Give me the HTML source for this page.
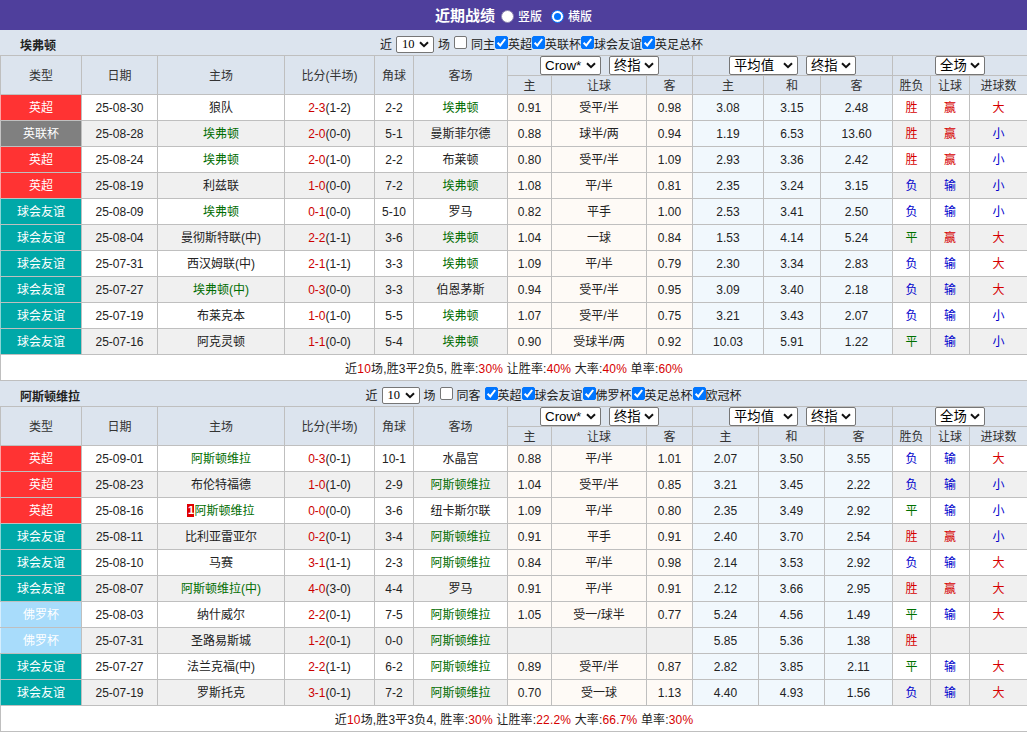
<!DOCTYPE html>
<html lang="zh-CN"><head><meta charset="utf-8"><title>近期战绩</title>
<style>
*{box-sizing:border-box}
html,body{margin:0;padding:0}
body{width:1027px;height:735px;overflow:hidden;background:#fff;font-family:"Liberation Sans","Noto Sans CJK SC",sans-serif;font-size:12px;color:#222;position:relative}
.top{height:30px;background:#4f3f9c;color:#fff;text-align:center;line-height:30px;font-size:12px;white-space:nowrap;position:relative}
.top .tt{font-size:15px;font-weight:bold;position:absolute;left:435px;top:1px}
.top .rd{position:absolute;top:10px;width:13px;height:13px;border-radius:50%;background:#fff;border:1px solid #8a84b0}
.top .rd.on{border:1px solid #0075ff}
.top .rd.on:after{content:"";position:absolute;left:2px;top:2px;width:7px;height:7px;border-radius:50%;background:#0075ff}
.top .rl{position:absolute;top:2px;font-size:12px;font-weight:500}
.bar{height:25px;background:#dce4ee;position:relative;white-space:nowrap}
.bar.b2{margin-top:0}
.bar .tn{position:absolute;left:20px;top:1px;line-height:30px;font-weight:bold;font-size:12px;color:#222}
.bar .flt{position:absolute;left:380px;top:4px;line-height:23px;height:21px;font-size:12px;color:#222;word-spacing:0.66px}
.bar.b2 .flt{left:365.5px}
.sel{display:inline-block;position:relative;height:19px;border:1px solid #767676;border-radius:2px;background:#fff;color:#000;font-size:13.33px;line-height:17px;text-align:left;padding-left:4px;vertical-align:top;font-weight:normal;word-spacing:0}
.sel svg{position:absolute;right:4px;top:5px;width:10px;height:7px}
.sel.s10{width:38px;height:17px;font-family:"Liberation Serif",serif;font-size:12.5px;line-height:15px;padding-left:5px;vertical-align:top;margin-top:2px}
.sel.s10 svg{top:4px}
.cb{display:inline-block;width:13px;height:13px;border:1px solid #767676;border-radius:2px;background:#fff;vertical-align:top;margin:2px 0 0 0;position:relative}
.cb.on{background:#0075ff;border-color:#0075ff}
.cb svg{position:absolute;left:-1px;top:-1px;width:13px;height:13px}
table.t{border-collapse:collapse;table-layout:fixed;width:1027px;}
table.t th,table.t td{border:1px solid #bfbfbf;text-align:center;font-weight:normal;padding:0;white-space:nowrap;overflow:hidden}
table.t th{background:#dce4ee;color:#333}
tr.h1{height:20px}
tr.h2{height:19px}
tr.r{height:26px}
tr.r td{background:#fff}
tr.r.alt td{background:#f0f0f0}
tr.r td.ah,tr.r.alt td.ah{background:#fefaf6}
tr.r td.eu,tr.r.alt td.eu{background:#f1f8fd}
td.ty{color:#fff}
tr.r td.ty.r{background:#ff3333;border-left-color:#ffa3a3}
tr.r td.ty.g{background:#808080;border-left-color:#c4c4c4}
tr.r td.ty.t{background:#00a8a8;border-left-color:#8ad6d6}
tr.r td.ty.b{background:#a8dcfb;border-left-color:#d6eefd}
.tg{color:#006c00}
.sc{color:#cc0000}
.red{color:#d60000}
.blue{color:#00c}
.green{color:#007000}
.rc{background:#e00000;color:#fff;padding:0;font-weight:bold;display:inline-block;width:7px;height:13px;line-height:13px;font-size:11px;vertical-align:1px;text-align:center}
tr.sum{height:26px}
tr.sum td{background:#fff;letter-spacing:0.17px}
.u{position:relative;top:-1px}

</style></head><body>
<div class="top"><span class="tt">近期战绩</span><span class="rd" style="left:501px"></span><span class="rl" style="left:518px">竖版</span><span class="rd on" style="left:551px"></span><span class="rl" style="left:568px">横版</span></div>
<div class="bar b1"><span class="tn">埃弗顿</span><div class="flt">近 <span class="sel s10">10<svg viewBox="0 0 10 7"><path d="M1 1.2 L5 5.2 L9 1.2" fill="none" stroke="#111" stroke-width="2"/></svg></span> 场 <span class="cb"></span> 同主<span class="cb on"><svg viewBox="0 0 13 13"><path d="M2.6 6.8 L5.3 9.4 L10.2 3" fill="none" stroke="#fff" stroke-width="2"/></svg></span>英超<span class="cb on"><svg viewBox="0 0 13 13"><path d="M2.6 6.8 L5.3 9.4 L10.2 3" fill="none" stroke="#fff" stroke-width="2"/></svg></span>英联杯<span class="cb on"><svg viewBox="0 0 13 13"><path d="M2.6 6.8 L5.3 9.4 L10.2 3" fill="none" stroke="#fff" stroke-width="2"/></svg></span>球会友谊<span class="cb on"><svg viewBox="0 0 13 13"><path d="M2.6 6.8 L5.3 9.4 L10.2 3" fill="none" stroke="#fff" stroke-width="2"/></svg></span>英足总杯</div></div>
<table class="t" cellspacing="0" cellpadding="0">
<colgroup><col style="width:81px"><col style="width:76px"><col style="width:127px"><col style="width:90px"><col style="width:39px"><col style="width:94px"><col style="width:44px"><col style="width:95px"><col style="width:46px"><col style="width:71px"><col style="width:57px"><col style="width:72px"><col style="width:38px"><col style="width:39px"><col style="width:58px"></colgroup>
<tr class="h1"><th rowspan="2"><span class="u">类型</span></th><th rowspan="2"><span class="u">日期</span></th><th rowspan="2"><span class="u">主场</span></th><th rowspan="2"><span class="u">比分(半场)</span></th><th rowspan="2"><span class="u">角球</span></th><th rowspan="2"><span class="u">客场</span></th>
<th colspan="3"><span class="sel" style="width:61px;left:-1px;margin-right:-1px">Crow*<svg viewBox="0 0 10 7"><path d="M1 1.2 L5 5.2 L9 1.2" fill="none" stroke="#111" stroke-width="2"/></svg></span><span class="sel" style="width:50px;margin-left:8px">终指<svg viewBox="0 0 10 7"><path d="M1 1.2 L5 5.2 L9 1.2" fill="none" stroke="#111" stroke-width="2"/></svg></span></th>
<th colspan="3"><span class="sel" style="width:69px">平均值<svg viewBox="0 0 10 7"><path d="M1 1.2 L5 5.2 L9 1.2" fill="none" stroke="#111" stroke-width="2"/></svg></span><span class="sel" style="width:50px;margin-left:8px">终指<svg viewBox="0 0 10 7"><path d="M1 1.2 L5 5.2 L9 1.2" fill="none" stroke="#111" stroke-width="2"/></svg></span></th>
<th colspan="3"><span class="sel" style="width:50px">全场<svg viewBox="0 0 10 7"><path d="M1 1.2 L5 5.2 L9 1.2" fill="none" stroke="#111" stroke-width="2"/></svg></span></th></tr>
<tr class="h2"><th><span class="u">主</span></th><th><span class="u">让球</span></th><th><span class="u">客</span></th><th><span class="u">主</span></th><th><span class="u">和</span></th><th><span class="u">客</span></th><th><span class="u">胜负</span></th><th><span class="u">让球</span></th><th><span class="u">进球数</span></th></tr>
<tr class="r"><td class="ty r"><span class="u">英超</span></td><td>25-08-30</td><td><span class="u">狼队</span></td><td><span class="sc">2-3</span>(1-2)</td><td>2-2</td><td><span class="u"><span class="tg">埃弗顿</span></span></td><td class="ah">0.91</td><td class="ah"><span class="u">受平/半</span></td><td class="ah">0.98</td><td class="eu">3.08</td><td class="eu">3.15</td><td class="eu">2.48</td><td class="red"><span class="u">胜</span></td><td class="red"><span class="u">赢</span></td><td class="red"><span class="u">大</span></td></tr>
<tr class="r alt"><td class="ty g"><span class="u">英联杯</span></td><td>25-08-28</td><td><span class="u"><span class="tg">埃弗顿</span></span></td><td><span class="sc">2-0</span>(0-0)</td><td>5-1</td><td><span class="u">曼斯菲尔德</span></td><td class="ah">0.88</td><td class="ah"><span class="u">球半/两</span></td><td class="ah">0.94</td><td class="eu">1.19</td><td class="eu">6.53</td><td class="eu">13.60</td><td class="red"><span class="u">胜</span></td><td class="red"><span class="u">赢</span></td><td class="blue"><span class="u">小</span></td></tr>
<tr class="r"><td class="ty r"><span class="u">英超</span></td><td>25-08-24</td><td><span class="u"><span class="tg">埃弗顿</span></span></td><td><span class="sc">2-0</span>(1-0)</td><td>2-2</td><td><span class="u">布莱顿</span></td><td class="ah">0.80</td><td class="ah"><span class="u">受平/半</span></td><td class="ah">1.09</td><td class="eu">2.93</td><td class="eu">3.36</td><td class="eu">2.42</td><td class="red"><span class="u">胜</span></td><td class="red"><span class="u">赢</span></td><td class="blue"><span class="u">小</span></td></tr>
<tr class="r alt"><td class="ty r"><span class="u">英超</span></td><td>25-08-19</td><td><span class="u">利兹联</span></td><td><span class="sc">1-0</span>(0-0)</td><td>7-2</td><td><span class="u"><span class="tg">埃弗顿</span></span></td><td class="ah">1.08</td><td class="ah"><span class="u">平/半</span></td><td class="ah">0.81</td><td class="eu">2.35</td><td class="eu">3.24</td><td class="eu">3.15</td><td class="blue"><span class="u">负</span></td><td class="blue"><span class="u">输</span></td><td class="blue"><span class="u">小</span></td></tr>
<tr class="r"><td class="ty t"><span class="u">球会友谊</span></td><td>25-08-09</td><td><span class="u"><span class="tg">埃弗顿</span></span></td><td><span class="sc">0-1</span>(0-0)</td><td>5-10</td><td><span class="u">罗马</span></td><td class="ah">0.82</td><td class="ah"><span class="u">平手</span></td><td class="ah">1.00</td><td class="eu">2.53</td><td class="eu">3.41</td><td class="eu">2.50</td><td class="blue"><span class="u">负</span></td><td class="blue"><span class="u">输</span></td><td class="blue"><span class="u">小</span></td></tr>
<tr class="r alt"><td class="ty t"><span class="u">球会友谊</span></td><td>25-08-04</td><td><span class="u">曼彻斯特联(中)</span></td><td><span class="sc">2-2</span>(1-1)</td><td>3-6</td><td><span class="u"><span class="tg">埃弗顿</span></span></td><td class="ah">1.04</td><td class="ah"><span class="u">一球</span></td><td class="ah">0.84</td><td class="eu">1.53</td><td class="eu">4.14</td><td class="eu">5.24</td><td class="green"><span class="u">平</span></td><td class="red"><span class="u">赢</span></td><td class="red"><span class="u">大</span></td></tr>
<tr class="r"><td class="ty t"><span class="u">球会友谊</span></td><td>25-07-31</td><td><span class="u">西汉姆联(中)</span></td><td><span class="sc">2-1</span>(1-1)</td><td>3-3</td><td><span class="u"><span class="tg">埃弗顿</span></span></td><td class="ah">1.09</td><td class="ah"><span class="u">平/半</span></td><td class="ah">0.79</td><td class="eu">2.30</td><td class="eu">3.34</td><td class="eu">2.83</td><td class="blue"><span class="u">负</span></td><td class="blue"><span class="u">输</span></td><td class="red"><span class="u">大</span></td></tr>
<tr class="r alt"><td class="ty t"><span class="u">球会友谊</span></td><td>25-07-27</td><td><span class="u"><span class="tg">埃弗顿(中)</span></span></td><td><span class="sc">0-3</span>(0-0)</td><td>3-3</td><td><span class="u">伯恩茅斯</span></td><td class="ah">0.94</td><td class="ah"><span class="u">受平/半</span></td><td class="ah">0.95</td><td class="eu">3.09</td><td class="eu">3.40</td><td class="eu">2.18</td><td class="blue"><span class="u">负</span></td><td class="blue"><span class="u">输</span></td><td class="red"><span class="u">大</span></td></tr>
<tr class="r"><td class="ty t"><span class="u">球会友谊</span></td><td>25-07-19</td><td><span class="u">布莱克本</span></td><td><span class="sc">1-0</span>(1-0)</td><td>5-5</td><td><span class="u"><span class="tg">埃弗顿</span></span></td><td class="ah">1.07</td><td class="ah"><span class="u">受平/半</span></td><td class="ah">0.75</td><td class="eu">3.21</td><td class="eu">3.43</td><td class="eu">2.07</td><td class="blue"><span class="u">负</span></td><td class="blue"><span class="u">输</span></td><td class="blue"><span class="u">小</span></td></tr>
<tr class="r alt"><td class="ty t"><span class="u">球会友谊</span></td><td>25-07-16</td><td><span class="u">阿克灵顿</span></td><td><span class="sc">1-1</span>(0-0)</td><td>5-4</td><td><span class="u"><span class="tg">埃弗顿</span></span></td><td class="ah">0.90</td><td class="ah"><span class="u">受球半/两</span></td><td class="ah">0.92</td><td class="eu">10.03</td><td class="eu">5.91</td><td class="eu">1.22</td><td class="green"><span class="u">平</span></td><td class="blue"><span class="u">输</span></td><td class="blue"><span class="u">小</span></td></tr>
<tr class="sum"><td colspan="15">近<span class="red">10</span>场,胜3平2负5, 胜率:<span class="red">30%</span> 让胜率:<span class="red">40%</span> 大率:<span class="red">40%</span> 单率:<span class="red">60%</span></td></tr>
</table>
<div class="bar b2"><span class="tn">阿斯顿维拉</span><div class="flt">近 <span class="sel s10">10<svg viewBox="0 0 10 7"><path d="M1 1.2 L5 5.2 L9 1.2" fill="none" stroke="#111" stroke-width="2"/></svg></span> 场 <span class="cb"></span> 同客 <span class="cb on"><svg viewBox="0 0 13 13"><path d="M2.6 6.8 L5.3 9.4 L10.2 3" fill="none" stroke="#fff" stroke-width="2"/></svg></span>英超<span class="cb on"><svg viewBox="0 0 13 13"><path d="M2.6 6.8 L5.3 9.4 L10.2 3" fill="none" stroke="#fff" stroke-width="2"/></svg></span>球会友谊<span class="cb on"><svg viewBox="0 0 13 13"><path d="M2.6 6.8 L5.3 9.4 L10.2 3" fill="none" stroke="#fff" stroke-width="2"/></svg></span>佛罗杯<span class="cb on"><svg viewBox="0 0 13 13"><path d="M2.6 6.8 L5.3 9.4 L10.2 3" fill="none" stroke="#fff" stroke-width="2"/></svg></span>英足总杯<span class="cb on"><svg viewBox="0 0 13 13"><path d="M2.6 6.8 L5.3 9.4 L10.2 3" fill="none" stroke="#fff" stroke-width="2"/></svg></span>欧冠杯</div></div>
<table class="t" cellspacing="0" cellpadding="0">
<colgroup><col style="width:81px"><col style="width:76px"><col style="width:127px"><col style="width:90px"><col style="width:39px"><col style="width:94px"><col style="width:44px"><col style="width:95px"><col style="width:46px"><col style="width:66px"><col style="width:66px"><col style="width:68px"><col style="width:38px"><col style="width:39px"><col style="width:58px"></colgroup>
<tr class="h1"><th rowspan="2"><span class="u">类型</span></th><th rowspan="2"><span class="u">日期</span></th><th rowspan="2"><span class="u">主场</span></th><th rowspan="2"><span class="u">比分(半场)</span></th><th rowspan="2"><span class="u">角球</span></th><th rowspan="2"><span class="u">客场</span></th>
<th colspan="3"><span class="sel" style="width:61px;left:-1px;margin-right:-1px">Crow*<svg viewBox="0 0 10 7"><path d="M1 1.2 L5 5.2 L9 1.2" fill="none" stroke="#111" stroke-width="2"/></svg></span><span class="sel" style="width:50px;margin-left:8px">终指<svg viewBox="0 0 10 7"><path d="M1 1.2 L5 5.2 L9 1.2" fill="none" stroke="#111" stroke-width="2"/></svg></span></th>
<th colspan="3"><span class="sel" style="width:69px">平均值<svg viewBox="0 0 10 7"><path d="M1 1.2 L5 5.2 L9 1.2" fill="none" stroke="#111" stroke-width="2"/></svg></span><span class="sel" style="width:50px;margin-left:8px">终指<svg viewBox="0 0 10 7"><path d="M1 1.2 L5 5.2 L9 1.2" fill="none" stroke="#111" stroke-width="2"/></svg></span></th>
<th colspan="3"><span class="sel" style="width:50px">全场<svg viewBox="0 0 10 7"><path d="M1 1.2 L5 5.2 L9 1.2" fill="none" stroke="#111" stroke-width="2"/></svg></span></th></tr>
<tr class="h2"><th><span class="u">主</span></th><th><span class="u">让球</span></th><th><span class="u">客</span></th><th><span class="u">主</span></th><th><span class="u">和</span></th><th><span class="u">客</span></th><th><span class="u">胜负</span></th><th><span class="u">让球</span></th><th><span class="u">进球数</span></th></tr>
<tr class="r"><td class="ty r"><span class="u">英超</span></td><td>25-09-01</td><td><span class="u"><span class="tg">阿斯顿维拉</span></span></td><td><span class="sc">0-3</span>(0-1)</td><td>10-1</td><td><span class="u">水晶宫</span></td><td class="ah">0.88</td><td class="ah"><span class="u">平/半</span></td><td class="ah">1.01</td><td class="eu">2.07</td><td class="eu">3.50</td><td class="eu">3.55</td><td class="blue"><span class="u">负</span></td><td class="blue"><span class="u">输</span></td><td class="red"><span class="u">大</span></td></tr>
<tr class="r alt"><td class="ty r"><span class="u">英超</span></td><td>25-08-23</td><td><span class="u">布伦特福德</span></td><td><span class="sc">1-0</span>(1-0)</td><td>2-9</td><td><span class="u"><span class="tg">阿斯顿维拉</span></span></td><td class="ah">1.04</td><td class="ah"><span class="u">受平/半</span></td><td class="ah">0.85</td><td class="eu">3.21</td><td class="eu">3.45</td><td class="eu">2.22</td><td class="blue"><span class="u">负</span></td><td class="blue"><span class="u">输</span></td><td class="blue"><span class="u">小</span></td></tr>
<tr class="r"><td class="ty r"><span class="u">英超</span></td><td>25-08-16</td><td><span class="u"><span class="rc">1</span><span class="tg">阿斯顿维拉</span></span></td><td><span class="sc">0-0</span>(0-0)</td><td>3-6</td><td><span class="u">纽卡斯尔联</span></td><td class="ah">1.09</td><td class="ah"><span class="u">平/半</span></td><td class="ah">0.80</td><td class="eu">2.35</td><td class="eu">3.49</td><td class="eu">2.92</td><td class="green"><span class="u">平</span></td><td class="blue"><span class="u">输</span></td><td class="blue"><span class="u">小</span></td></tr>
<tr class="r alt"><td class="ty t"><span class="u">球会友谊</span></td><td>25-08-11</td><td><span class="u">比利亚雷亚尔</span></td><td><span class="sc">0-2</span>(0-1)</td><td>3-4</td><td><span class="u"><span class="tg">阿斯顿维拉</span></span></td><td class="ah">0.91</td><td class="ah"><span class="u">平手</span></td><td class="ah">0.91</td><td class="eu">2.40</td><td class="eu">3.70</td><td class="eu">2.54</td><td class="red"><span class="u">胜</span></td><td class="red"><span class="u">赢</span></td><td class="blue"><span class="u">小</span></td></tr>
<tr class="r"><td class="ty t"><span class="u">球会友谊</span></td><td>25-08-10</td><td><span class="u">马赛</span></td><td><span class="sc">3-1</span>(1-1)</td><td>2-3</td><td><span class="u"><span class="tg">阿斯顿维拉</span></span></td><td class="ah">0.84</td><td class="ah"><span class="u">平/半</span></td><td class="ah">0.98</td><td class="eu">2.14</td><td class="eu">3.53</td><td class="eu">2.92</td><td class="blue"><span class="u">负</span></td><td class="blue"><span class="u">输</span></td><td class="red"><span class="u">大</span></td></tr>
<tr class="r alt"><td class="ty t"><span class="u">球会友谊</span></td><td>25-08-07</td><td><span class="u"><span class="tg">阿斯顿维拉(中)</span></span></td><td><span class="sc">4-0</span>(3-0)</td><td>4-4</td><td><span class="u">罗马</span></td><td class="ah">0.91</td><td class="ah"><span class="u">平/半</span></td><td class="ah">0.91</td><td class="eu">2.12</td><td class="eu">3.66</td><td class="eu">2.95</td><td class="red"><span class="u">胜</span></td><td class="red"><span class="u">赢</span></td><td class="red"><span class="u">大</span></td></tr>
<tr class="r"><td class="ty b"><span class="u">佛罗杯</span></td><td>25-08-03</td><td><span class="u">纳什威尔</span></td><td><span class="sc">2-2</span>(0-1)</td><td>7-5</td><td><span class="u"><span class="tg">阿斯顿维拉</span></span></td><td class="ah">1.05</td><td class="ah"><span class="u">受一/球半</span></td><td class="ah">0.77</td><td class="eu">5.24</td><td class="eu">4.56</td><td class="eu">1.49</td><td class="green"><span class="u">平</span></td><td class="blue"><span class="u">输</span></td><td class="red"><span class="u">大</span></td></tr>
<tr class="r alt"><td class="ty b"><span class="u">佛罗杯</span></td><td>25-07-31</td><td><span class="u">圣路易斯城</span></td><td><span class="sc">1-2</span>(0-1)</td><td>0-0</td><td><span class="u"><span class="tg">阿斯顿维拉</span></span></td><td></td><td></td><td></td><td class="eu">5.85</td><td class="eu">5.36</td><td class="eu">1.38</td><td class="red"><span class="u">胜</span></td><td class=""></td><td class=""></td></tr>
<tr class="r"><td class="ty t"><span class="u">球会友谊</span></td><td>25-07-27</td><td><span class="u">法兰克福(中)</span></td><td><span class="sc">2-2</span>(1-1)</td><td>6-2</td><td><span class="u"><span class="tg">阿斯顿维拉</span></span></td><td class="ah">0.89</td><td class="ah"><span class="u">受平/半</span></td><td class="ah">0.87</td><td class="eu">2.82</td><td class="eu">3.85</td><td class="eu">2.11</td><td class="green"><span class="u">平</span></td><td class="blue"><span class="u">输</span></td><td class="red"><span class="u">大</span></td></tr>
<tr class="r alt"><td class="ty t"><span class="u">球会友谊</span></td><td>25-07-19</td><td><span class="u">罗斯托克</span></td><td><span class="sc">3-1</span>(0-1)</td><td>7-2</td><td><span class="u"><span class="tg">阿斯顿维拉</span></span></td><td class="ah">0.70</td><td class="ah"><span class="u">受一球</span></td><td class="ah">1.13</td><td class="eu">4.40</td><td class="eu">4.93</td><td class="eu">1.56</td><td class="blue"><span class="u">负</span></td><td class="blue"><span class="u">输</span></td><td class="red"><span class="u">大</span></td></tr>
<tr class="sum"><td colspan="15">近<span class="red">10</span>场,胜3平3负4, 胜率:<span class="red">30%</span> 让胜率:<span class="red">22.2%</span> 大率:<span class="red">66.7%</span> 单率:<span class="red">30%</span></td></tr>
</table>
</body></html>
